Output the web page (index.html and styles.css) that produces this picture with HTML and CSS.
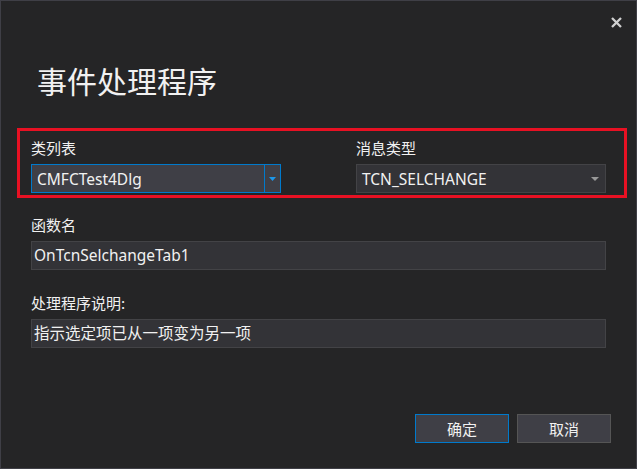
FILE: index.html
```html
<!DOCTYPE html>
<html lang="zh-CN">
<head>
<meta charset="utf-8">
<title>事件处理程序</title>
<link rel="stylesheet" href="styles.css">
</head>
<body>
<div class="dialog">
  <button class="close" aria-label="关闭">
    <svg width="11" height="11" viewBox="0 0 11 11"><path d="M1 1L10 10M10 1L1 10" stroke="#d0d0d0" stroke-width="2.3" fill="none"/></svg>
  </button>
  <h1 class="title">事件处理程序</h1>
  <div class="highlight">
    <div class="field">
      <label class="label">类列表</label>
      <div class="combo focused">
        <span class="value">CMFCTest4Dlg</span>
        <span class="drop drop-focused">
          <svg width="7" height="4" viewBox="0 0 7 4"><path d="M0 0H7L3.5 4Z" fill="#1c97ea"/></svg>
        </span>
      </div>
    </div>
    <div class="field">
      <label class="label">消息类型</label>
      <div class="combo">
        <span class="value">TCN_SELCHANGE</span>
        <span class="drop drop-plain">
          <svg width="8" height="4" viewBox="0 0 8 4"><path d="M0 0H8L4 4Z" fill="#999999"/></svg>
        </span>
      </div>
    </div>
  </div>
  <div class="field wide first">
    <label class="label">函数名</label>
    <div class="textbox">OnTcnSelchangeTab1</div>
  </div>
  <div class="field wide second">
    <label class="label">处理程序说明:</label>
    <div class="textbox">指示选定项已从一项变为另一项</div>
  </div>
  <div class="actions">
    <button class="btn btn-primary">确定</button>
    <button class="btn">取消</button>
  </div>
</div>
</body>
</html>
```

FILE: styles.css
```css
* { box-sizing: border-box; }
html, body { margin: 0; padding: 0; }
body {
  background: #252526;
  font-family: "Segoe UI", "Noto Sans", "Noto Sans CJK SC", sans-serif;
  color: #f1f1f1;
}
.dialog {
  position: relative;
  width: 637px;
  height: 469px;
  border: 1px solid #3f3f46;
  background: #252526;
  padding: 59px 0 0 0;
  display: flex;
  flex-direction: column;
}
.close {
  position: absolute;
  top: 16px;
  right: 14px;
  width: 11px;
  height: 11px;
  padding: 0;
  border: 0;
  background: transparent;
  display: flex;
}
.title {
  margin: 0 0 28px 36px;
  font-family: "Noto Sans CJK SC", sans-serif;
  font-weight: 400;
  font-size: 30px;
  line-height: 40px;
  color: #f1f1f1;
}
.highlight {
  margin-left: 16px;
  width: 610px;
  border: 3px solid #e81123;
  padding: 7px 0 2px 11px;
  display: flex;
  gap: 75px;
}
.field {
  display: flex;
  flex-direction: column;
  width: 250px;
}
.field.wide {
  width: 575px;
  margin-left: 30px;
}
.field.first { margin-top: 17px; }
.field.second { margin-top: 23px; }
.label {
  font-family: "Noto Sans CJK SC", sans-serif;
  font-size: 15px;
  line-height: 20px;
  height: 20px;
  margin-bottom: 6px;
  color: #f1f1f1;
}
.combo {
  height: 29px;
  background: #333337;
  border: 1px solid #434346;
  display: flex;
  align-items: stretch;
}
.combo.focused {
  border-color: #007acc;
  background: #3f3f46;
}
.value {
  flex: 1;
  padding-left: 5px;
  font-size: 15.5px;
  line-height: 28px;
}
.drop {
  width: 16px;
  display: flex;
  align-items: center;
  justify-content: center;
}
.drop-focused {
  border-left: 1px solid #007acc;
}
.drop-plain {
  justify-content: flex-start;
  padding-left: 2px;
}
.textbox {
  height: 29px;
  background: #333337;
  border: 1px solid #434346;
  padding-left: 2px;
  font-size: 15.5px;
  line-height: 27px;
}
.actions {
  margin-top: 66px;
  display: flex;
  justify-content: flex-end;
  gap: 8px;
  padding-right: 25px;
}
.btn {
  width: 94px;
  height: 29px;
  background: #3f3f46;
  border: 1px solid #555555;
  color: #f1f1f1;
  font-family: "Noto Sans CJK SC", sans-serif;
  font-size: 15px;
  line-height: 27px;
  padding: 0;
}
.btn-primary {
  border-color: #007acc;
}
```
